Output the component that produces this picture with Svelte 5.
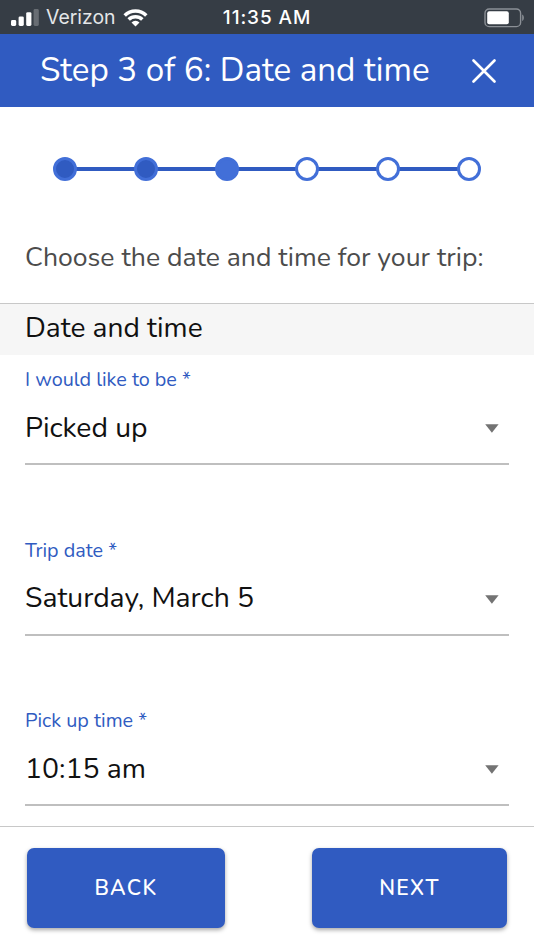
<script lang="ts">
  type Field = { id: string; label: string; value: string };

  const totalSteps = 6;
  const currentStep = 3;
  const steps = Array.from({ length: totalSteps }, (_, i) => i + 1);

  const fields: Field[] = [
    { id: "direction", label: "I would like to be *", value: "Picked up" },
    { id: "date", label: "Trip date *", value: "Saturday, March 5" },
    { id: "time", label: "Pick up time *", value: "10:15 am" },
  ];
</script>

<div class="screen">
  <div class="status">
    <div class="status__carrier">
      <svg width="28" height="18" viewBox="0 0 28 18" fill="#fff" aria-hidden="true">
        <rect x="0" y="11" width="5.2" height="6" rx="1.4" />
        <rect x="7.6" y="7.4" width="5.2" height="9.6" rx="1.4" />
        <rect x="15.2" y="3.2" width="5.2" height="13.8" rx="1.4" />
        <rect x="22.6" y="0" width="5.2" height="17" rx="1.4" opacity="0.25" />
      </svg>
      <span class="status__name">Verizon</span>
      <svg class="status__wifi" width="25" height="18" viewBox="0 0 26 19" aria-hidden="true">
        <g fill="none" stroke="#fff" stroke-width="3.7">
          <path d="M1.6 6.9a16.2 16.2 0 0 1 22.8 0" />
          <path d="M5.8 11.2a10.2 10.2 0 0 1 14.4 0" />
        </g>
        <path d="M13 18.4 8.8 14.2a6 6 0 0 1 8.4 0Z" fill="#fff" />
      </svg>
    </div>
    <span class="status__time">11:35 AM</span>
    <svg class="status__battery" width="40" height="20" viewBox="0 0 40 20" aria-hidden="true">
      <rect x="1" y="1" width="35.6" height="17.6" rx="4.2" fill="none" stroke="#8b9096" stroke-width="1.4" />
      <rect x="3.2" y="3.3" width="21.6" height="13" rx="2" fill="#fff" />
      <path d="M38.2 6.6c2.2 1 2.2 5.4 0 6.4Z" fill="#8b9096" />
    </svg>
  </div>

  <header class="header">
    <h1>Step {currentStep} of {totalSteps}: Date and time</h1>
    <button type="button" class="header__close" aria-label="Close">
      <svg width="24" height="24" viewBox="0 0 24 24" aria-hidden="true">
        <path d="M1.5 1.5l21 21M22.5 1.5l-21 21" stroke="#fff" stroke-width="2.6" stroke-linecap="round" />
      </svg>
    </button>
  </header>

  <ol class="stepper">
    {#each steps as step}
      <li class:done={step < currentStep} class:current={step === currentStep}></li>
    {/each}
  </ol>

  <p class="prompt">Choose the date and time for your trip:</p>

  <h2 class="section-title">Date and time</h2>

  <main class="fields">
    {#each fields as field}
      <div class="field">
        <span class="field__label" id="{field.id}-label">{field.label}</span>
        <button type="button" class="field__select" aria-labelledby="{field.id}-label">
          <span class="field__value">{field.value}</span>
          <svg width="14" height="9" viewBox="0 0 14 9" aria-hidden="true">
            <path d="M0.2 0.2h13.4L6.9 8.8Z" fill="#737373" />
          </svg>
        </button>
      </div>
    {/each}
  </main>

  <footer class="footer">
    <button type="button" class="footer__back">BACK</button>
    <button type="button" class="footer__next">NEXT</button>
  </footer>
</div>

<style>
  :global(body) {
    background: #fff;
  }

  .screen {
    box-sizing: border-box;
    display: flex;
    flex-direction: column;
    height: 950px;
    overflow: hidden;
    font-family: Nunito, Lato, sans-serif;
    color: #111;
  }

  .screen * {
    box-sizing: border-box;
  }

  button {
    border: 0;
    padding: 0;
    background: none;
    color: inherit;
    font: inherit;
    cursor: pointer;
  }

  .status {
    display: grid;
    grid-template-columns: 1fr auto 1fr;
    align-items: center;
    flex: none;
    height: 34px;
    padding: 0 10px 0 11px;
    background: #363d45;
    color: #fff;
    font-family: Inter, sans-serif;
    font-size: 19px;
    line-height: 34px;
  }

  .status__carrier {
    display: flex;
    align-items: center;
  }

  .status__name {
    margin-left: 7px;
    color: #e4e6e8;
    font-size: 19.4px;
    line-height: 35px;
  }

  .status__wifi {
    margin-left: 7px;
  }

  .status__time {
    margin-right: 1px;
    padding-top: 1px;
    font-weight: 500;
    letter-spacing: 0.9px;
  }

  .status__battery {
    justify-self: end;
  }

  .header {
    display: flex;
    align-items: center;
    justify-content: space-between;
    flex: none;
    height: 73px;
    padding: 0 38px 0 40px;
    background: #305bc1;
    color: #fff;
  }

  .header h1 {
    margin: 0;
    padding-bottom: 2px;
    font-size: 33.2px;
    font-weight: 400;
    line-height: 70px;
    white-space: nowrap;
  }

  .header__close {
    display: flex;
  }

  .stepper {
    display: flex;
    align-items: center;
    justify-content: space-between;
    flex: none;
    width: 428px;
    height: 24px;
    margin: 50px 0 0 53px;
    padding: 0;
    list-style: none;
    background: linear-gradient(#305bc1, #305bc1) center / calc(100% - 24px) 4px no-repeat;
  }

  .stepper li {
    width: 24px;
    height: 24px;
    border: 3.6px solid #426fd8;
    border-radius: 50%;
    background: #fff;
  }

  .stepper li.done {
    background: #305bc1;
  }

  .stepper li.current {
    background: #426fd8;
  }

  .prompt {
    flex: none;
    height: 122px;
    margin: 0;
    padding: 60px 25px 0;
    color: #4c4c4c;
    font-size: 26.6px;
    line-height: 32px;
    white-space: nowrap;
  }

  .section-title {
    flex: none;
    height: 52px;
    margin: 0;
    padding: 0 25px;
    border-top: 1px solid #c8c8c8;
    background: #f6f6f6;
    font-size: 28.1px;
    font-weight: 400;
    line-height: 49px;
  }

  .fields {
    flex: 1;
    min-height: 0;
    overflow: hidden;
    padding: 0 25px;
  }

  .field {
    height: 170.5px;
    padding-top: 13px;
  }

  .field__label {
    display: block;
    color: #305bc1;
    font-size: 19.8px;
    line-height: 24px;
  }

  .field__select {
    display: flex;
    align-items: center;
    justify-content: space-between;
    width: 484px;
    height: 73px;
    padding: 2px 10px 0 0;
    border-bottom: 2px solid #bfbfbf;
  }

  .field__value {
    padding-bottom: 2px;
    font-size: 28.3px;
    line-height: 36px;
  }

  .footer {
    display: flex;
    align-items: flex-start;
    justify-content: space-between;
    flex: none;
    height: 124px;
    padding: 21px 27px 0;
    border-top: 1px solid #c8c8c8;
    background: #fff;
  }

  .footer button {
    height: 80px;
    border-radius: 7px;
    background: #305bc1;
    box-shadow: 0 2px 4px rgba(0, 0, 0, 0.35);
    color: #fff;
    font-size: 21.2px;
    font-weight: 600;
    letter-spacing: 1.4px;
  }

  .footer .footer__back {
    width: 198px;
  }

  .footer .footer__next {
    width: 195px;
  }
</style>
